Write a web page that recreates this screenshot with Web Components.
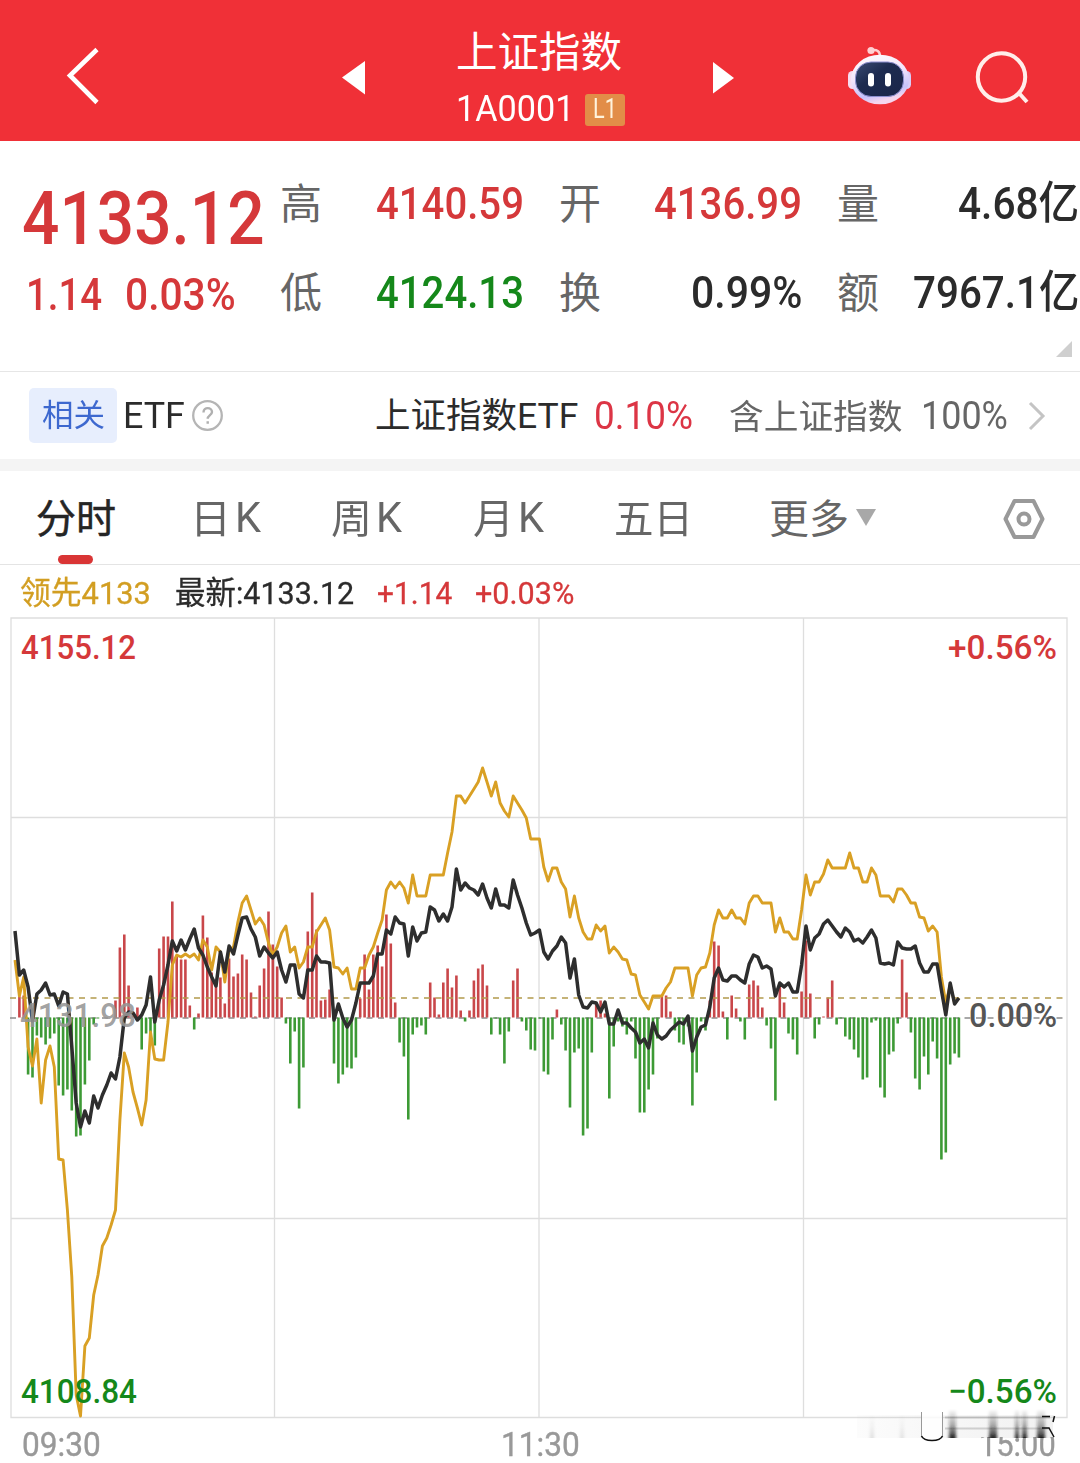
<!DOCTYPE html>
<html lang="zh-CN">
<head>
<meta charset="UTF-8">
<title>上证指数</title>
<style>
  body {
    margin: 0;
    width: 1080px;
    height: 1463px;
    overflow: hidden;
    background: #fff;
    color: #2b2b2b;
    font-family: Roboto, "Noto Sans CJK SC", sans-serif;
    --up: #d5383a;
    --down: #15881a;
    --muted: #666;
  }
</style>
</head>
<body>
<stock-page></stock-page>

<script>
// One line of text squeezed or stretched to a given width
class FitText extends HTMLElement {
  connectedCallback() {
    if (!this.shadowRoot) {
      this.attachShadow({ mode: "open" }).innerHTML = `
        <style>
          :host { display: inline-block; flex: none; line-height: 1; white-space: nowrap; }
          span { display: inline-block; transform-origin: 0 50%; }
        </style>
        <span><slot></slot></span>`;
    }
    const width = Number(this.getAttribute("w"));
    const span = this.shadowRoot.querySelector("span");
    this.style.fontSize = this.getAttribute("size") + "px";
    this.style.width = width + "px";
    span.style.transform = `scaleX(${width / span.offsetWidth})`;
  }
}

class StockHeader extends HTMLElement {
  connectedCallback() {
    this.attachShadow({ mode: "open" }).innerHTML = `
      <style>
        :host { display: grid; grid-template-columns: 342px 23px 1fr 20px 113px 66px 64px 55px 49px;
                height: 141px; box-sizing: border-box; background: #f03037; color: #fff; }
        svg { display: block; overflow: visible; }
        .back { margin: 48px 0 0 66px; }
        .prev { margin-top: 61px; }
        .next { margin-top: 62px; }
        .bot { grid-column: 6; margin-top: 45px; }
        .search { grid-column: 8; margin-top: 50px; }
        .title { padding: 32px 0 0 91px; display: flex; flex-direction: column; }
        .code { display: flex; align-items: center; gap: 11px; margin-top: 20px; height: 32px; }
        .level { display: flex; align-items: center; justify-content: center; width: 40px; height: 32px;
                 border-radius: 3px; background: #e28d48; color: #fff3dc; }
      </style>
      <svg class="back" width="34" height="56"><path d="M31 1.500 4 27.500 31 54.500" fill="none" stroke="#fff" stroke-width="4.600"/></svg>
      <svg class="prev" width="23" height="34"><path d="M0 16.500 23 0V33.500Z" fill="#fff"/></svg>
      <div class="title">
        <fit-text w="166" size="41.500"><slot name="name"></slot></fit-text>
        <div class="code"><fit-text w="118" size="36.500"><slot name="code"></slot></fit-text>
        <span class="level"><fit-text w="24" size="27"><slot name="level"></slot></fit-text></span></div>
      </div>
      <svg class="next" width="21" height="32"><path d="M21 16 0 0V31.500Z" fill="#fff"/></svg>
      <svg class="bot" width="66" height="62" viewBox="846 45 66 62">
        <defs>
          <linearGradient id="shell" x1="0" y1="0" x2="0.300" y2="1"><stop offset="0" stop-color="#fff"/><stop offset=".5" stop-color="#f3e4fb"/><stop offset=".85" stop-color="#c5c2fb"/><stop offset="1" stop-color="#f5d5ee"/></linearGradient>
          <linearGradient id="visor" x1="0" y1="0" x2="1" y2="1"><stop offset="0" stop-color="#3a4c74"/><stop offset=".4" stop-color="#1d2b50"/><stop offset="1" stop-color="#1a2549"/></linearGradient>
        </defs>
        <path d="M871 50.500q9-2 9 6" fill="none" stroke="#ffcfd2" stroke-width="2.500"/>
        <circle cx="871" cy="50.500" r="3.600" fill="#ffd0d3"/>
        <rect x="848" y="71" width="9" height="18" rx="4.500" fill="#f7dcf0"/>
        <rect x="902" y="71" width="9" height="18" rx="4.500" fill="#d9cdf8"/>
        <ellipse cx="880" cy="79.500" rx="29" ry="24.800" fill="url(#shell)"/>
        <rect x="855.500" y="62" width="48" height="34.500" rx="15.500" fill="url(#visor)" stroke="#8c8fd0" stroke-width="1"/>
        <rect x="868" y="73" width="6" height="13.500" rx="3" fill="#fff"/>
        <rect x="885" y="73" width="6" height="13.500" rx="3" fill="#fff"/>
      </svg>
      <svg class="search" width="55" height="55" viewBox="976 50 55 55" fill="none" stroke="#ffeeea" stroke-width="4">
        <circle cx="1001.500" cy="77" r="23.700"/><path d="m1018 92 9 10"/>
      </svg>`;
  }
}

class StatCell extends HTMLElement {
  connectedCallback() {
    this.attachShadow({ mode: "open" }).innerHTML = `
      <style>
        :host { display: flex; justify-content: space-between; align-items: center; height: 60px; }
        .label { font-size: 42px; line-height: 60px; color: var(--muted); }
        fit-text { font-weight: 500; margin-bottom: 3px; }
        :host([tone="up"]) fit-text { color: var(--up); }
        :host([tone="down"]) fit-text { color: var(--down); }
      </style>
      <span class="label">${this.getAttribute("label")}</span>
      <fit-text w="${this.getAttribute("w")}" size="45"><slot></slot></fit-text>`;
  }
}

class QuotePanel extends HTMLElement {
  connectedCallback() {
    this.attachShadow({ mode: "open" }).innerHTML = `
      <style>
        :host { display: grid; grid-template-columns: 258px 800px; height: 231px; box-sizing: border-box;
                padding-left: 22px; border-bottom: 1px solid #e6e6e6; position: relative; }
        .price { color: var(--up); font-weight: 500; display: flex; flex-direction: column; padding-top: 40px; }
        .change { display: flex; gap: 23px; margin-top: 17px; padding-left: 4px; }
        .stats { display: grid; grid-template-columns: 244px 243px 242px; column-gap: 35px; row-gap: 29px;
                 align-content: start; padding-top: 34px; }
        .corner { position: absolute; right: 8px; bottom: 14px; }
      </style>
      <div class="price">
        <fit-text w="243" size="75">4133.12</fit-text>
        <div class="change"><fit-text w="76" size="44">1.14</fit-text><fit-text w="111" size="44">0.03%</fit-text></div>
      </div>
      <div class="stats">
        <stat-cell label="高" w="148" tone="up">4140.59</stat-cell>
        <stat-cell label="开" w="148" tone="up">4136.99</stat-cell>
        <stat-cell label="量" w="121">4.68亿</stat-cell>
        <stat-cell label="低" w="148" tone="down">4124.13</stat-cell>
        <stat-cell label="换" w="111">0.99%</stat-cell>
        <stat-cell label="额" w="166">7967.1亿</stat-cell>
      </div>
      <svg class="corner" width="16" height="16"><path d="M16 0V16H0Z" fill="#cfcfcf"/></svg>`;
  }
}

class EtfBar extends HTMLElement {
  connectedCallback() {
    this.attachShadow({ mode: "open" }).innerHTML = `
      <style>
        :host { display: flex; align-items: center; height: 99px; box-sizing: border-box; padding-left: 29px;
                border-bottom: 12px solid #f4f4f4; }
        .tag { display: flex; flex: none; align-items: center; justify-content: center; width: 88px; height: 55px;
               border-radius: 5px; background: #e7eefd; color: #3d68cf; margin-right: 6px; }
        svg { flex: none; }
        .help { margin: 0 152px 0 7px; }
        .rate { color: #dc3545; margin: 0 36px 0 16px; }
        .part { color: var(--muted); margin-top: 3px; }
        .name { margin-top: 3px; }
        .share { color: var(--muted); margin: 0 20px 0 18px; }
      </style>
      <span class="tag"><fit-text w="63" size="31">相关</fit-text></span>
      <fit-text w="62" size="37">ETF</fit-text>
      <svg class="help" width="31" height="31" fill="none">
        <circle cx="15.500" cy="15.500" r="14.300" stroke="#b5b5b5" stroke-width="2.300"/>
        <path d="M11.500 12.500c0-6 8.500-5.500 8.500-.5 0 3-4.300 3.300-4.300 6.800M15.700 21.300v2.500" stroke="#b0b0b0" stroke-width="2.400"/>
      </svg>
      <fit-text class="name" w="203" size="35.500">上证指数ETF</fit-text>
      <fit-text class="rate" w="99" size="38">0.10%</fit-text>
      <fit-text class="part" w="174" size="34.500">含上证指数</fit-text>
      <fit-text class="share" w="87" size="38">100%</fit-text>
      <svg width="18" height="30"><path d="M2 2 15 15 2 28" fill="none" stroke="#c4c4c4" stroke-width="3"/></svg>`;
  }
}

class PeriodTabs extends HTMLElement {
  connectedCallback() {
    this.attachShadow({ mode: "open" }).innerHTML = `
      <style>
        :host { display: grid; grid-template-columns: 154px 141px 142px 141px 155px 234px 42px; align-items: center;
                height: 94px; box-sizing: border-box; padding-left: 36px; border-bottom: 1px solid #e4e4e4;
                color: var(--muted); position: relative; }
        .zh { margin-top: 5px; }
        .active { color: #252525; -webkit-text-stroke: .5px #252525; }
        .active::after { content: ""; position: absolute; left: 58px; bottom: 0; width: 35px; height: 9px;
                         border-radius: 4.500px; background: #d93535; }
        .pair { display: flex; gap: 4px; align-items: center; }
        .more { display: flex; gap: 7px; align-items: center; }
        .gear { margin-top: 2px; }
      </style>
      <fit-text class="zh active" w="80" size="40">分时</fit-text>
      <span class="pair"><fit-text class="zh" w="41" size="40">日</fit-text><fit-text w="26" size="43">K</fit-text></span>
      <span class="pair"><fit-text class="zh" w="41" size="40">周</fit-text><fit-text w="26" size="43">K</fit-text></span>
      <span class="pair"><fit-text class="zh" w="41" size="40">月</fit-text><fit-text w="26" size="43">K</fit-text></span>
      <fit-text class="zh" w="79" size="40">五日</fit-text>
      <span class="more"><fit-text class="zh" w="80" size="40">更多</fit-text><svg width="20" height="17"><path d="M0 0H20L10 17Z" fill="#a8a8a8"/></svg></span>
      <svg class="gear" width="42" height="42" fill="none" stroke="#999" stroke-width="4">
        <path d="M11.500 3h19L39.500 21 30.500 39h-19L2.500 21Z" stroke-linejoin="round"/><circle cx="21" cy="21" r="5.500"/>
      </svg>`;
  }
}

class ChartLegend extends HTMLElement {
  connectedCallback() {
    this.attachShadow({ mode: "open" }).innerHTML = `
      <style>
        :host { display: flex; align-items: center; height: 52px; padding: 5px 0 0 20px; box-sizing: border-box; }
        fit-text { -webkit-text-stroke: .3px currentColor; }
        .lead { color: #d29e22; margin-right: 24px; }
        .up { color: var(--up); margin-left: 23px; }
      </style>
      <fit-text class="lead" w="131" size="31.500">领先4133</fit-text>
      <fit-text w="179" size="31.500">最新:4133.12</fit-text>
      <fit-text class="up" w="75" size="31.500">+1.14</fit-text>
      <fit-text class="up" w="99" size="31.500">+0.03%</fit-text>`;
  }
}

// One value per minute; bars are heights over the zero line, lines are y positions
const BARS = [0,21,22,-57,-60,-18,-20,-27,-21,-16,-68,-78,-72,-93,-119,-118,-67,-43,-7,-1,
  0,0,0,17,70,83,32,2,10,-32,-16,-16,-28,69,81,81,116,62,58,58,
  12,-12,4,102,80,45,35,40,14,59,41,44,63,58,25,1,32,49,106,73,
  51,20,-6,-46,-14,-91,-50,86,125,88,17,18,28,-46,-66,-57,-50,-51,-40,19,
  63,28,63,72,51,103,74,15,-25,-39,-102,-17,-10,-8,-17,35,20,3,35,49,
  30,42,7,-4,7,37,49,53,32,-17,-1,-17,-46,-14,37,49,-4,-13,-32,-33,
  -1,-54,-57,-22,8,-7,-33,-90,-35,-31,-118,-111,-35,15,17,4,-81,-29,-4,-9,
  -17,-4,-41,-95,-95,-72,-57,-21,21,22,6,-13,-25,-27,-9,-88,-55,-4,-13,17,
  76,72,6,-22,22,9,-4,-22,33,37,32,10,-8,-31,-83,32,15,-16,-22,-37,
  26,77,24,-21,-7,1,20,37,-7,-1,-19,-22,-32,-40,-62,-60,-5,-3,-70,-80,
  -37,-34,-6,58,25,-15,-61,-72,-39,-57,-24,-41,-142,-135,-47,-36,-40];
const INDEX = [931,975,970,987,1021,994,990,983,995,994,1006,992,994,1047,1103,1127,1111,1123,1096,1108,
  1095,1085,1073,1079,1057,1018,1012,1013,1020,1015,1005,977,1022,1000,985,965,941,951,940,950,
  939,929,948,955,967,977,986,952,972,946,954,935,918,917,929,937,956,947,953,958,
  952,970,982,965,965,994,998,970,970,956,962,962,963,1020,1004,1018,1027,1020,1003,983,
  983,983,976,954,954,930,934,917,923,924,956,927,941,933,932,907,910,921,914,921,
  907,869,890,883,888,890,895,884,898,908,889,905,905,908,880,895,908,923,935,933,
  930,952,959,951,946,937,943,978,959,995,1007,1008,1002,1003,1012,1002,1024,1024,1010,1023,
  1023,1028,1032,1043,1039,1048,1023,1035,1039,1036,1030,1026,1022,1024,1016,1051,1037,1027,1025,1007,
  978,968,980,981,976,976,980,983,964,955,957,968,966,969,996,983,987,983,992,992,
  965,926,950,938,934,924,920,926,932,937,928,932,941,939,943,937,930,938,963,964,
  963,965,942,948,949,949,946,963,972,972,964,964,990,1015,983,1004,998];
const LEAD = [960,996,977,1047,1066,1039,1103,1060,1046,1067,1159,1160,1210,1277,1395,1416,1346,1338,1295,1275,
  1246,1238,1225,1210,1120,1053,1067,1092,1108,1125,1100,1032,1059,1060,1060,1022,965,955,957,954,
  957,954,960,940,947,970,947,952,982,950,947,922,903,896,910,924,918,925,943,955,
  947,933,926,952,947,968,962,947,947,932,925,918,930,967,968,974,968,989,989,968,
  968,955,947,933,920,890,882,888,882,888,903,875,896,896,896,875,875,875,875,853,
  832,796,796,803,796,789,782,768,782,796,782,803,811,817,796,803,810,818,839,839,
  839,867,881,868,868,882,889,917,896,918,932,939,939,925,931,926,953,947,952,959,
  960,974,975,995,1002,1009,996,996,996,988,982,968,968,968,968,996,975,968,967,953,
  925,910,918,918,910,918,918,924,903,896,896,903,903,903,932,918,932,932,939,939,
  910,875,895,882,882,874,860,868,868,868,868,853,868,868,882,882,868,875,896,896,
  896,902,889,889,895,903,903,917,918,931,926,932,977,1003,985,1003,998];

class MinuteChart extends HTMLElement {
  connectedCallback() {
    const x = (i) => (15 + i * 4.37).toFixed(1);
    const points = (ys) => ys.map((y, i) => `${x(i)},${y}`).join(" ");
    const bars = (sign) =>
      BARS.map((h, i) => (h * sign > 0 ? `M${x(i)} 1017.500v${-h}` : "")).join("");

    this.attachShadow({ mode: "open" }).innerHTML = `
      <style>
        :host { display: block; height: 802px; }
        svg { display: block; font-size: 34px; overflow: visible; }
        .grid { stroke: #dedede; stroke-width: 1.300; fill: none; }
        .up { fill: var(--up); }
        .down { fill: var(--down); }
      </style>
      <svg width="1080" height="802" viewBox="0 617 1080 802">
        <path class="grid" d="M11 618H1067V1417.500H11ZM11 817.500H1067M11 1218.500H1067M274.500 618V1417M539 618V1417M803.500 618V1417"/>
        <path d="M10 1018H1068" stroke="#8c8c8c" stroke-width="1.500" stroke-dasharray="6 5.500"/>
        <path d="${bars(1)}" stroke="#c9474a" stroke-width="2.600"/>
        <path d="${bars(-1)}" stroke="#3d9a35" stroke-width="2.600"/>
        <path d="M10 998H1068" stroke="#b29a4c" stroke-width="1.600" stroke-dasharray="6 5.500"/>
        <polyline points="${points(LEAD)}" fill="none" stroke="#d9a024" stroke-width="2.900" stroke-linejoin="round"/>
        <polyline points="${points(INDEX)}" fill="none" stroke="#2e2e2e" stroke-width="3.500" stroke-linejoin="round"/>
        <g font-weight="500">
          <text class="up" x="21" y="659" textLength="115" lengthAdjust="spacingAndGlyphs">4155.12</text>
          <text class="up" x="948" y="659" textLength="109" lengthAdjust="spacingAndGlyphs">+0.56%</text>
          <text x="20" y="1027" fill="#969696" fill-opacity=".9" textLength="116" lengthAdjust="spacingAndGlyphs">4131.98</text>
          <text x="969" y="1027" fill="#555" textLength="88" lengthAdjust="spacingAndGlyphs">0.00%</text>
          <text class="down" x="21" y="1403" textLength="116" lengthAdjust="spacingAndGlyphs">4108.84</text>
          <text class="down" x="948" y="1403" textLength="109" lengthAdjust="spacingAndGlyphs">−0.56%</text>
        </g>
      </svg>`;
  }
}

class TimeAxis extends HTMLElement {
  connectedCallback() {
    this.attachShadow({ mode: "open" }).innerHTML = `
      <style>
        :host { display: flex; justify-content: space-between; padding: 8px 24px 0 22px; height: 36px;
                color: #999; position: relative; }
        fit-text { -webkit-text-stroke: .4px currentColor; }
        svg { position: absolute; left: 855px; top: -11px; }
      </style>
      <fit-text w="79" size="34">09:30</fit-text>
      <fit-text w="79" size="34">11:30</fit-text>
      <fit-text w="77" size="34">15:00</fit-text>
      <svg width="205" height="36" viewBox="855 1408 205 36">
        <defs>
          <linearGradient id="fade" x1="0" y1="0" x2="0" y2="1"><stop offset="0" stop-color="#222" stop-opacity="0"/><stop offset=".55" stop-color="#222" stop-opacity=".35"/><stop offset="1" stop-color="#111" stop-opacity=".9"/></linearGradient>
          <linearGradient id="haze" x1="0" y1="0" x2="1" y2="0"><stop offset="0" stop-color="#999" stop-opacity=".03"/><stop offset="1" stop-color="#999" stop-opacity=".14"/></linearGradient>
          <filter id="soft" x="-50%" width="200%"><feGaussianBlur stdDeviation="1.800 0"/></filter>
        </defs>
        <rect x="981" y="1419" width="76" height="18" fill="#fff"/>
        <rect x="857" y="1415" width="196" height="23" fill="url(#haze)"/>
        <path d="M945 1417.500h105M945 1428.500h105" stroke="#888" stroke-opacity=".35" stroke-width="2"/>
        <g fill="url(#fade)" filter="url(#soft)">
          <rect x="949" y="1409" width="7" height="29"/><rect x="989" y="1409" width="8" height="29"/>
          <rect x="1015" y="1409" width="4" height="29"/><rect x="1022" y="1409" width="5" height="29"/>
          <rect x="1037" y="1409" width="8" height="29"/>
          <rect x="870" y="1414" width="4" height="24" opacity=".12"/><rect x="900" y="1414" width="4" height="24" opacity=".1"/>
        </g>
        <rect x="922" y="1411" width="20" height="27" fill="#fff" opacity=".8"/>
        <path d="M921.500 1412v24M942.500 1412v24" stroke="#999" stroke-width="1"/>
        <path d="M921.500 1436q2 4.500 10.500 4.500t10.500-4.500" fill="none" stroke="#111" stroke-width="1.600"/>
        <path d="M1042 1416.500h8M1054.500 1416l-1.500 6M1042 1428h7l5 9" fill="none" stroke="#111" stroke-width="1.500"/>
      </svg>`;
  }
}

class StockPage extends HTMLElement {
  connectedCallback() {
    this.attachShadow({ mode: "open" }).innerHTML = `
      <style>
        :host { display: flex; flex-direction: column; width: 1080px; }
      </style>
      <stock-header><span slot="name">上证指数</span><span slot="code">1A0001</span><span slot="level">L1</span></stock-header>
      <quote-panel></quote-panel>
      <etf-bar></etf-bar>
      <period-tabs></period-tabs>
      <chart-legend></chart-legend>
      <minute-chart></minute-chart>
      <time-axis></time-axis>`;
  }
}

customElements.define("fit-text", FitText);
customElements.define("stock-header", StockHeader);
customElements.define("stat-cell", StatCell);
customElements.define("quote-panel", QuotePanel);
customElements.define("etf-bar", EtfBar);
customElements.define("period-tabs", PeriodTabs);
customElements.define("chart-legend", ChartLegend);
customElements.define("minute-chart", MinuteChart);
customElements.define("time-axis", TimeAxis);
customElements.define("stock-page", StockPage);
</script>
</body>
</html>
